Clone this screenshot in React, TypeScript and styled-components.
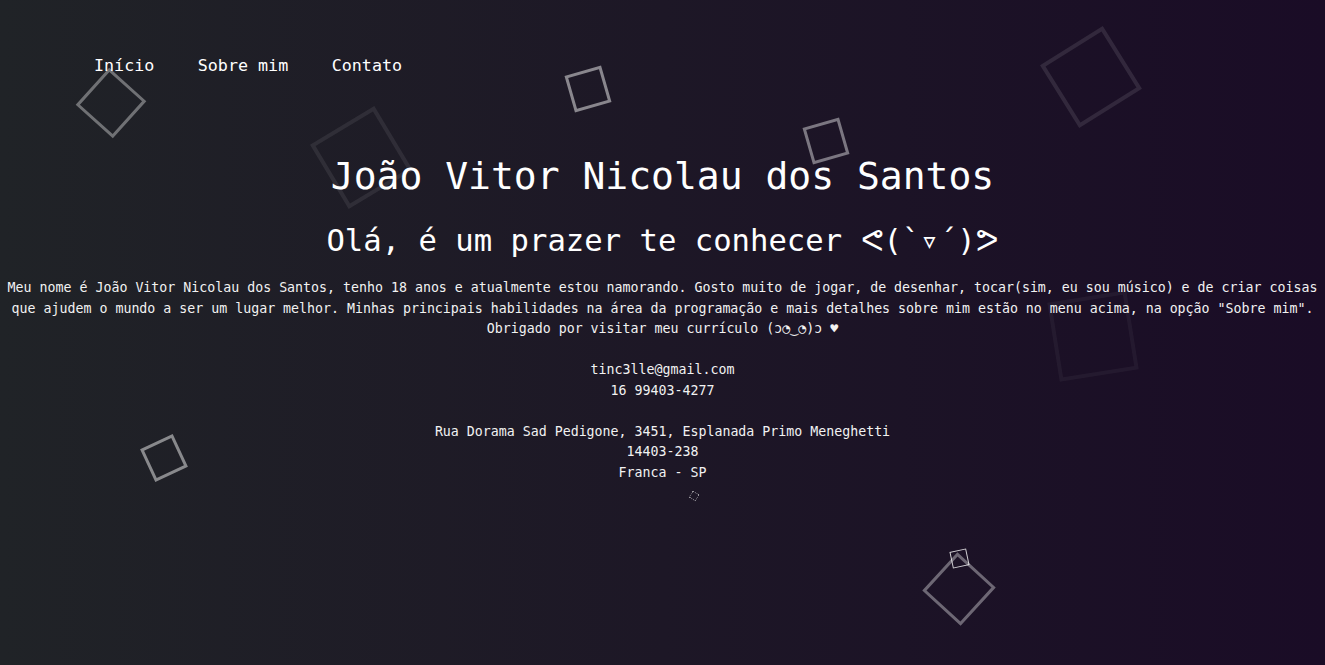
import React from "react";
import styled, { createGlobalStyle, css } from "styled-components";

const GlobalStyle = createGlobalStyle`
  html, body { margin: 0; padding: 0; }
  body {
    background: #1e1b24;
    font-family: "DejaVu Sans Mono", "Liberation Mono", monospace;
  }
  * { box-sizing: border-box; }
`;

const Page = styled.div`
  position: relative;
  min-height: 665px;
  overflow: hidden;
  background: linear-gradient(to right, #202327 0%, #1d1726 50%, #1a0c26 100%);
  color: #ffffff;
  display: flex;
  flex-direction: column;
`;

const Nav = styled.nav`
  position: relative;
  z-index: 1;
  display: flex;
  gap: 43.5px;
  padding: 55px 0 0 94px;
`;

const NavLink = styled.a`
  font-size: 16.7px;
  line-height: 20px;
  color: #ffffff;
  text-decoration: none;
  cursor: pointer;
`;

const Main = styled.main`
  position: relative;
  z-index: 1;
  display: flex;
  flex-direction: column;
  align-items: center;
  text-align: center;
  padding: 78px 2px 0;
`;

const Title = styled.h1`
  margin: 0;
  font-size: 38px;
  line-height: 46px;
  font-weight: 400;
`;

const Subtitle = styled.h2`
  margin: 23px 0 0;
  font-size: 30.6px;
  line-height: 38px;
  font-weight: 400;
`;

const Text = styled.p`
  margin: 18px 0 0;
  font-size: 13.27px;
  line-height: 20.5px;
  color: #f2f2f2;
`;

type ShapeProps = {
  $x: number;
  $y: number;
  $size: number;
  $border: number;
  $rot: number;
  $alpha: number;
  $dotted?: boolean;
};

const Shape = styled.span<ShapeProps>`
  position: absolute;
  z-index: 0;
  left: ${(p) => p.$x - p.$size / 2}px;
  top: ${(p) => p.$y - p.$size / 2}px;
  width: ${(p) => p.$size}px;
  height: ${(p) => p.$size}px;
  border: ${(p) => p.$border}px ${(p) => (p.$dotted ? "dotted" : "solid")}
    rgba(255, 255, 255, ${(p) => p.$alpha});
  transform: rotate(${(p) => p.$rot}deg);
  ${(p) =>
    p.$dotted &&
    css`
      border-radius: 1px;
    `}
`;

const shapes: ShapeProps[] = [
  { $x: 111, $y: 103, $size: 50, $border: 3, $rot: 42, $alpha: 0.36 },
  { $x: 361, $y: 157, $size: 75, $border: 4, $rot: -31, $alpha: 0.08 },
  { $x: 588, $y: 89, $size: 38, $border: 3, $rot: -16, $alpha: 0.48 },
  { $x: 826, $y: 141, $size: 38, $border: 3, $rot: -16, $alpha: 0.42 },
  { $x: 1091, $y: 77, $size: 74, $border: 4, $rot: -32, $alpha: 0.1 },
  { $x: 1093, $y: 336, $size: 80, $border: 4, $rot: -9, $alpha: 0.045 },
  { $x: 164, $y: 458, $size: 36, $border: 3, $rot: -25, $alpha: 0.47 },
  { $x: 959, $y: 589, $size: 52, $border: 3, $rot: 42.5, $alpha: 0.36 },
  { $x: 959, $y: 558, $size: 17, $border: 1, $rot: -12, $alpha: 0.8 },
  { $x: 694, $y: 496, $size: 8, $border: 1, $rot: 30, $alpha: 0.6, $dotted: true },
];

export default function App() {
  return (
    <>
      <GlobalStyle />
      <Page>
        {shapes.map((s, i) => (
          <Shape key={i} {...s} />
        ))}
        <Nav>
          <NavLink>Início</NavLink>
          <NavLink>Sobre mim</NavLink>
          <NavLink>Contato</NavLink>
        </Nav>
        <Main>
          <Title>João Vitor Nicolau dos Santos</Title>
          <Subtitle>Olá, é um prazer te conhecer ᕙ(`▿´)ᕗ</Subtitle>
          <Text>
            Meu nome é João Vitor Nicolau dos Santos, tenho 18 anos e atualmente estou namorando. Gosto muito
            de jogar, de desenhar, tocar(sim, eu sou músico) e de criar coisas que ajudem o mundo a ser um lugar
            melhor. Minhas principais habilidades na área da programação e mais detalhes sobre mim estão no menu
            acima, na opção "Sobre mim". Obrigado por visitar meu currículo (ɔ◔‿◔)ɔ ♥
            <br />
            <br />
            tinc3lle@gmail.com
            <br />
            16 99403-4277
            <br />
            <br />
            Rua Dorama Sad Pedigone, 3451, Esplanada Primo Meneghetti
            <br />
            14403-238
            <br />
            Franca - SP
          </Text>
        </Main>
      </Page>
    </>
  );
}
